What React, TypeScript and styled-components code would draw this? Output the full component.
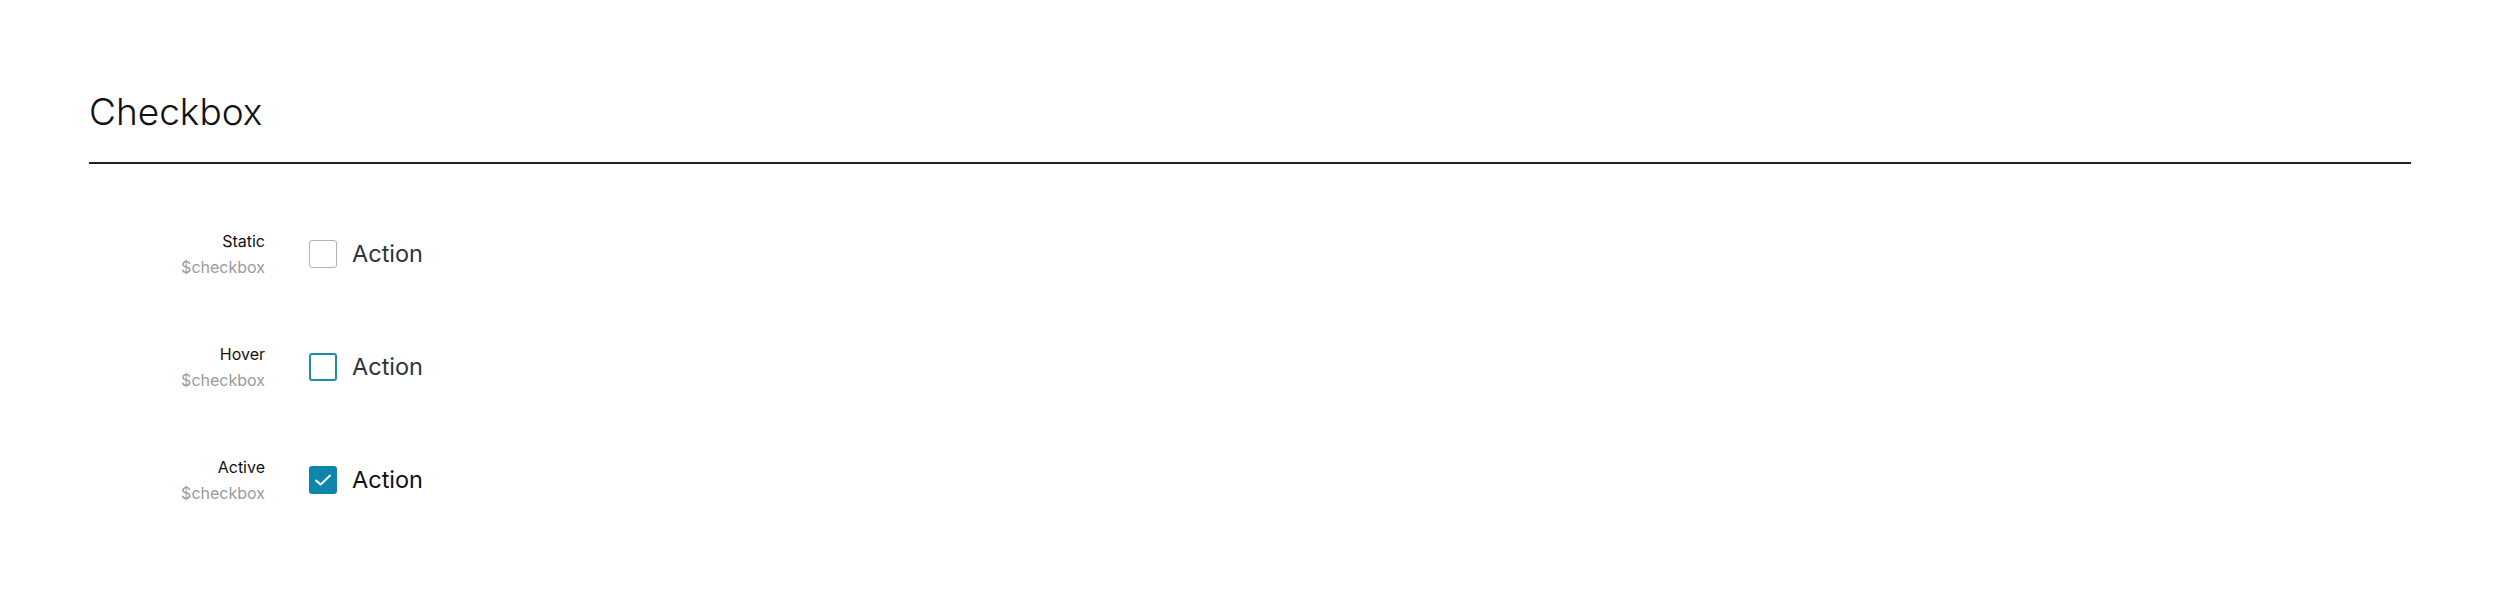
import React from 'react';
import styled, { createGlobalStyle } from 'styled-components';

type BoxState = 'static' | 'hover' | 'active';

interface IBoxProps {
    state: BoxState;
}

const variants: { state: BoxState; title: string }[] = [
    { state: 'static', title: 'Static' },
    { state: 'hover', title: 'Hover' },
    { state: 'active', title: 'Active' },
];

const App: React.FC = () => {
    return (
        <>
            <GlobalStyle />
            <Page>
                <Heading>Checkbox</Heading>
                <List>
                    {variants.map((item) => (
                        <Row key={item.state}>
                            <Meta>
                                <MetaTitle>{item.title}</MetaTitle>
                                <MetaToken>$checkbox</MetaToken>
                            </Meta>
                            <Control>
                                <Box state={item.state}>
                                    {item.state === 'active' && (
                                        <svg width='18' height='14' viewBox='0 0 18 14' fill='none'>
                                            <path
                                                d='M2 7.5L6.6 11.6L16 2.5'
                                                stroke='#fff'
                                                strokeWidth='2'
                                                strokeLinecap='round'
                                                strokeLinejoin='round'
                                            />
                                        </svg>
                                    )}
                                </Box>
                                <Label state={item.state}>Action</Label>
                            </Control>
                        </Row>
                    ))}
                </List>
            </Page>
        </>
    );
};

const GlobalStyle = createGlobalStyle`
    body {
        margin: 0;
        background: #ffffff;
        font-family: Inter, 'Noto Sans', sans-serif;
    }
`;

const Page = styled.div`
    padding: 89px 89px 0;
`;

const Heading = styled.h1`
    margin: 0;
    padding-bottom: 28px;

    font-size: 37px;
    font-weight: 300;
    line-height: 45px;
    color: #111111;

    border-bottom: 2px solid #222222;
`;

const List = styled.div`
    display: flex;
    flex-direction: column;
    gap: 61px;

    padding-top: 64px;
`;

const Row = styled.div`
    display: flex;
    align-items: center;
    gap: 44px;
`;

const Meta = styled.div`
    display: flex;
    flex-direction: column;
    align-items: flex-end;

    width: 176px;

    font-size: 16px;
    line-height: 26px;
`;

const MetaTitle = styled.span`
    color: #111111;
`;

const MetaToken = styled.span`
    color: #9a9a9a;
`;

const Control = styled.div`
    display: flex;
    align-items: center;
    gap: 15px;
`;

const Box = styled.div<IBoxProps>`
    box-sizing: border-box;

    display: flex;
    justify-content: center;
    align-items: center;

    width: 28px;
    height: 28px;

    border-radius: 3px;
    border: ${(props) =>
        props.state === 'static'
            ? '1.5px solid #b3b3b3'
            : props.state === 'hover'
            ? '2px solid #1d8db3'
            : '2px solid #0e86ab'};
    background-color: ${(props) => (props.state === 'active' ? '#0e86ab' : '#ffffff')};
`;

const Label = styled.span<IBoxProps>`
    font-size: 23.5px;
    line-height: 30px;
    color: ${(props) => (props.state === 'active' ? '#111111' : '#2b3540')};
`;

export default App;
